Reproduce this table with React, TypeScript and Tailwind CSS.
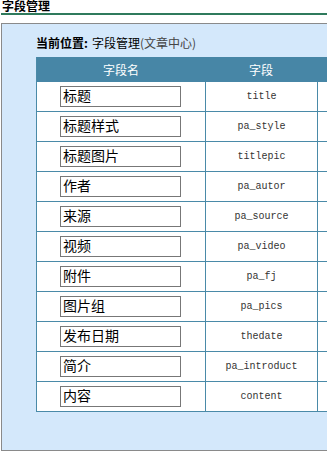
import React from "react";

// Field list for the article module: display name + column key
const FIELDS = [
  { name: "标题", key: "title" },
  { name: "标题样式", key: "pa_style" },
  { name: "标题图片", key: "titlepic" },
  { name: "作者", key: "pa_autor" },
  { name: "来源", key: "pa_source" },
  { name: "视频", key: "pa_video" },
  { name: "附件", key: "pa_fj" },
  { name: "图片组", key: "pa_pics" },
  { name: "发布日期", key: "thedate" },
  { name: "简介", key: "pa_introduct" },
  { name: "内容", key: "content" },
];

const CJK = "font-['Noto_Sans_CJK_SC','Noto_Sans',sans-serif]";

export default function App() {
  return (
    <div className={`w-[327px] h-[454px] overflow-hidden bg-white ${CJK}`}>
      {/* Page title */}
      <div className="h-[15px] ml-[1px] border-b-2 border-[#2f7a5c]">
        <div className="pl-[1px] text-[12px] leading-[12px] font-bold text-black">字段管理</div>
      </div>

      {/* Main panel */}
      <div className="mt-[8px] ml-[1px] w-[420px] h-[428px] border border-[#8a8a8a] bg-[#d4e8fb] pl-[34px] pt-[11px]">
        <div className="text-[12px] leading-[16px] text-black">
          <span className="font-bold">当前位置:</span>
          <span className="ml-[4px]">字段管理</span>
          <span className="text-[#444]">(文章中心)</span>
        </div>

        <div className="mt-[6px] w-[420px] border-l border-[#4a8aa8]">
          {/* Header */}
          <div className="flex h-[25px] bg-[#4786a6] text-white text-[12px] items-center">
            <div className="w-[168px] text-center">字段名</div>
            <div className="w-[112px] text-center">字段</div>
            <div className="flex-1" />
          </div>

          {FIELDS.map((f) => (
            <div key={f.key} className="flex h-[30px] border-b border-[#4a8aa8] bg-white">
              <div className="w-[168px] pl-[23px] pt-[4px]">
                <div className="w-[121px] h-[21px] border border-[#777] bg-white pl-[2px] text-[14px] leading-[16px] text-black">
                  {f.name}
                </div>
              </div>
              <div className="w-[112px] border-l border-[#4a8aa8] flex items-center justify-center font-['Liberation_Mono',monospace] text-[10px] text-[#333]">
                {f.key}
              </div>
              <div className="flex-1 border-l border-[#4a8aa8]" />
            </div>
          ))}
        </div>
      </div>
    </div>
  );
}
